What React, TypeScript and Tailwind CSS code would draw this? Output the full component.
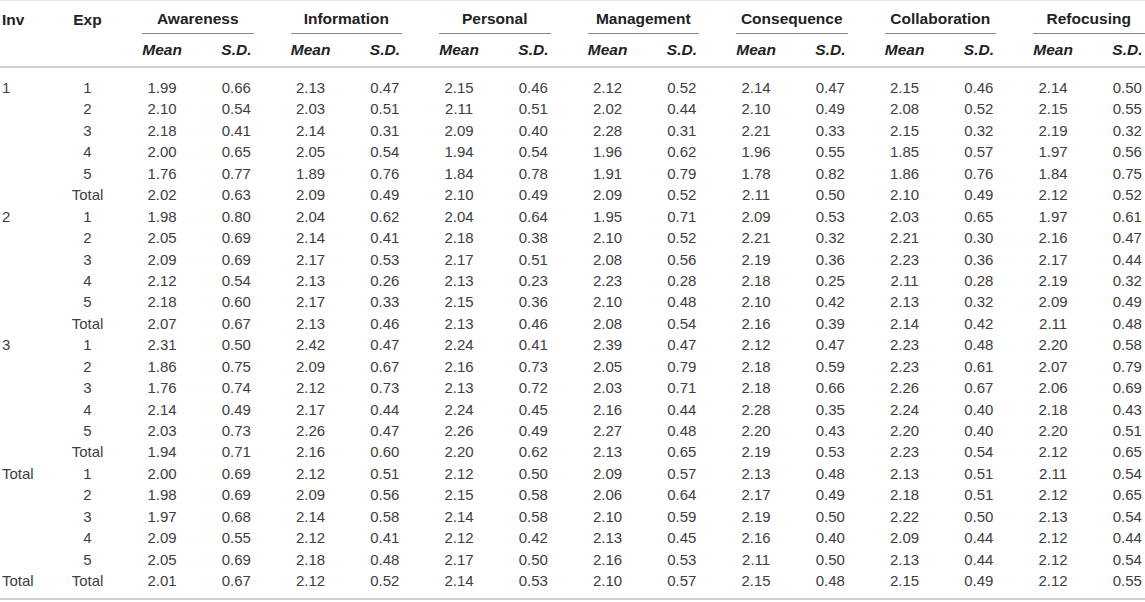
const groups = ["Awareness", "Information", "Personal", "Management", "Consequence", "Collaboration", "Refocusing"];

// inv, exp, then mean/sd pairs per group
const rows: [string, string, string][] = [
  ["1", "1", "1.99 0.66 2.13 0.47 2.15 0.46 2.12 0.52 2.14 0.47 2.15 0.46 2.14 0.50"],
  ["", "2", "2.10 0.54 2.03 0.51 2.11 0.51 2.02 0.44 2.10 0.49 2.08 0.52 2.15 0.55"],
  ["", "3", "2.18 0.41 2.14 0.31 2.09 0.40 2.28 0.31 2.21 0.33 2.15 0.32 2.19 0.32"],
  ["", "4", "2.00 0.65 2.05 0.54 1.94 0.54 1.96 0.62 1.96 0.55 1.85 0.57 1.97 0.56"],
  ["", "5", "1.76 0.77 1.89 0.76 1.84 0.78 1.91 0.79 1.78 0.82 1.86 0.76 1.84 0.75"],
  ["", "Total", "2.02 0.63 2.09 0.49 2.10 0.49 2.09 0.52 2.11 0.50 2.10 0.49 2.12 0.52"],
  ["2", "1", "1.98 0.80 2.04 0.62 2.04 0.64 1.95 0.71 2.09 0.53 2.03 0.65 1.97 0.61"],
  ["", "2", "2.05 0.69 2.14 0.41 2.18 0.38 2.10 0.52 2.21 0.32 2.21 0.30 2.16 0.47"],
  ["", "3", "2.09 0.69 2.17 0.53 2.17 0.51 2.08 0.56 2.19 0.36 2.23 0.36 2.17 0.44"],
  ["", "4", "2.12 0.54 2.13 0.26 2.13 0.23 2.23 0.28 2.18 0.25 2.11 0.28 2.19 0.32"],
  ["", "5", "2.18 0.60 2.17 0.33 2.15 0.36 2.10 0.48 2.10 0.42 2.13 0.32 2.09 0.49"],
  ["", "Total", "2.07 0.67 2.13 0.46 2.13 0.46 2.08 0.54 2.16 0.39 2.14 0.42 2.11 0.48"],
  ["3", "1", "2.31 0.50 2.42 0.47 2.24 0.41 2.39 0.47 2.12 0.47 2.23 0.48 2.20 0.58"],
  ["", "2", "1.86 0.75 2.09 0.67 2.16 0.73 2.05 0.79 2.18 0.59 2.23 0.61 2.07 0.79"],
  ["", "3", "1.76 0.74 2.12 0.73 2.13 0.72 2.03 0.71 2.18 0.66 2.26 0.67 2.06 0.69"],
  ["", "4", "2.14 0.49 2.17 0.44 2.24 0.45 2.16 0.44 2.28 0.35 2.24 0.40 2.18 0.43"],
  ["", "5", "2.03 0.73 2.26 0.47 2.26 0.49 2.27 0.48 2.20 0.43 2.20 0.40 2.20 0.51"],
  ["", "Total", "1.94 0.71 2.16 0.60 2.20 0.62 2.13 0.65 2.19 0.53 2.23 0.54 2.12 0.65"],
  ["Total", "1", "2.00 0.69 2.12 0.51 2.12 0.50 2.09 0.57 2.13 0.48 2.13 0.51 2.11 0.54"],
  ["", "2", "1.98 0.69 2.09 0.56 2.15 0.58 2.06 0.64 2.17 0.49 2.18 0.51 2.12 0.65"],
  ["", "3", "1.97 0.68 2.14 0.58 2.14 0.58 2.10 0.59 2.19 0.50 2.22 0.50 2.13 0.54"],
  ["", "4", "2.09 0.55 2.12 0.41 2.12 0.42 2.13 0.45 2.16 0.40 2.09 0.44 2.12 0.44"],
  ["", "5", "2.05 0.69 2.18 0.48 2.17 0.50 2.16 0.53 2.11 0.50 2.13 0.44 2.12 0.54"],
  ["Total", "Total", "2.01 0.67 2.12 0.52 2.14 0.53 2.10 0.57 2.15 0.48 2.15 0.49 2.12 0.55"],
];

const cols = "grid grid-cols-[50px_75px_repeat(14,74.25px)]";

export default function App() {
  return (
    <div className="h-[602px] w-[1145px] overflow-hidden bg-white font-['Liberation_Sans',Arial,sans-serif] text-[15px]">
      <div className="w-[1165px] border-t border-[#e8e8e8]">
        {/* header row 1 */}
        <div className={`${cols} h-[33px] text-[15.5px] font-bold text-[#222]`}>
          <div className="flex items-center pl-[2px] pt-[4px]">Inv</div>
          <div className="flex items-center justify-center pt-[4px]">Exp</div>
          {groups.map((g) => (
            <div key={g} className="col-span-2 flex flex-col">
              <div className="ml-[17px] mr-[20px] flex flex-1 items-center justify-center border-b border-[#8a8a8a] pt-[4px]">
                {g}
              </div>
            </div>
          ))}
        </div>

        {/* header row 2 */}
        <div className={`${cols} h-[34px] border-b-2 border-[#cfcfcf] text-[15.5px] font-bold italic text-[#222]`}>
          <div />
          <div />
          {groups.map((g) => (
            <div key={g} className="contents">
              <div className="flex items-center justify-center">Mean</div>
              <div className="flex items-center justify-center">S.D.</div>
            </div>
          ))}
        </div>

        {/* body */}
        <div className="border-b-2 border-[#cfcfcf] pb-[6px] pt-[9px] text-[#404040]">
          {rows.map(([inv, exp, vals], i) => (
            <div key={i} className={`${cols} h-[21.45px] items-center`}>
              <div className="pl-[2px]">{inv}</div>
              <div className="text-center">{exp}</div>
              {vals.split(" ").map((v, j) => (
                <div key={j} className="text-center">
                  {v}
                </div>
              ))}
            </div>
          ))}
        </div>
      </div>
    </div>
  );
}
